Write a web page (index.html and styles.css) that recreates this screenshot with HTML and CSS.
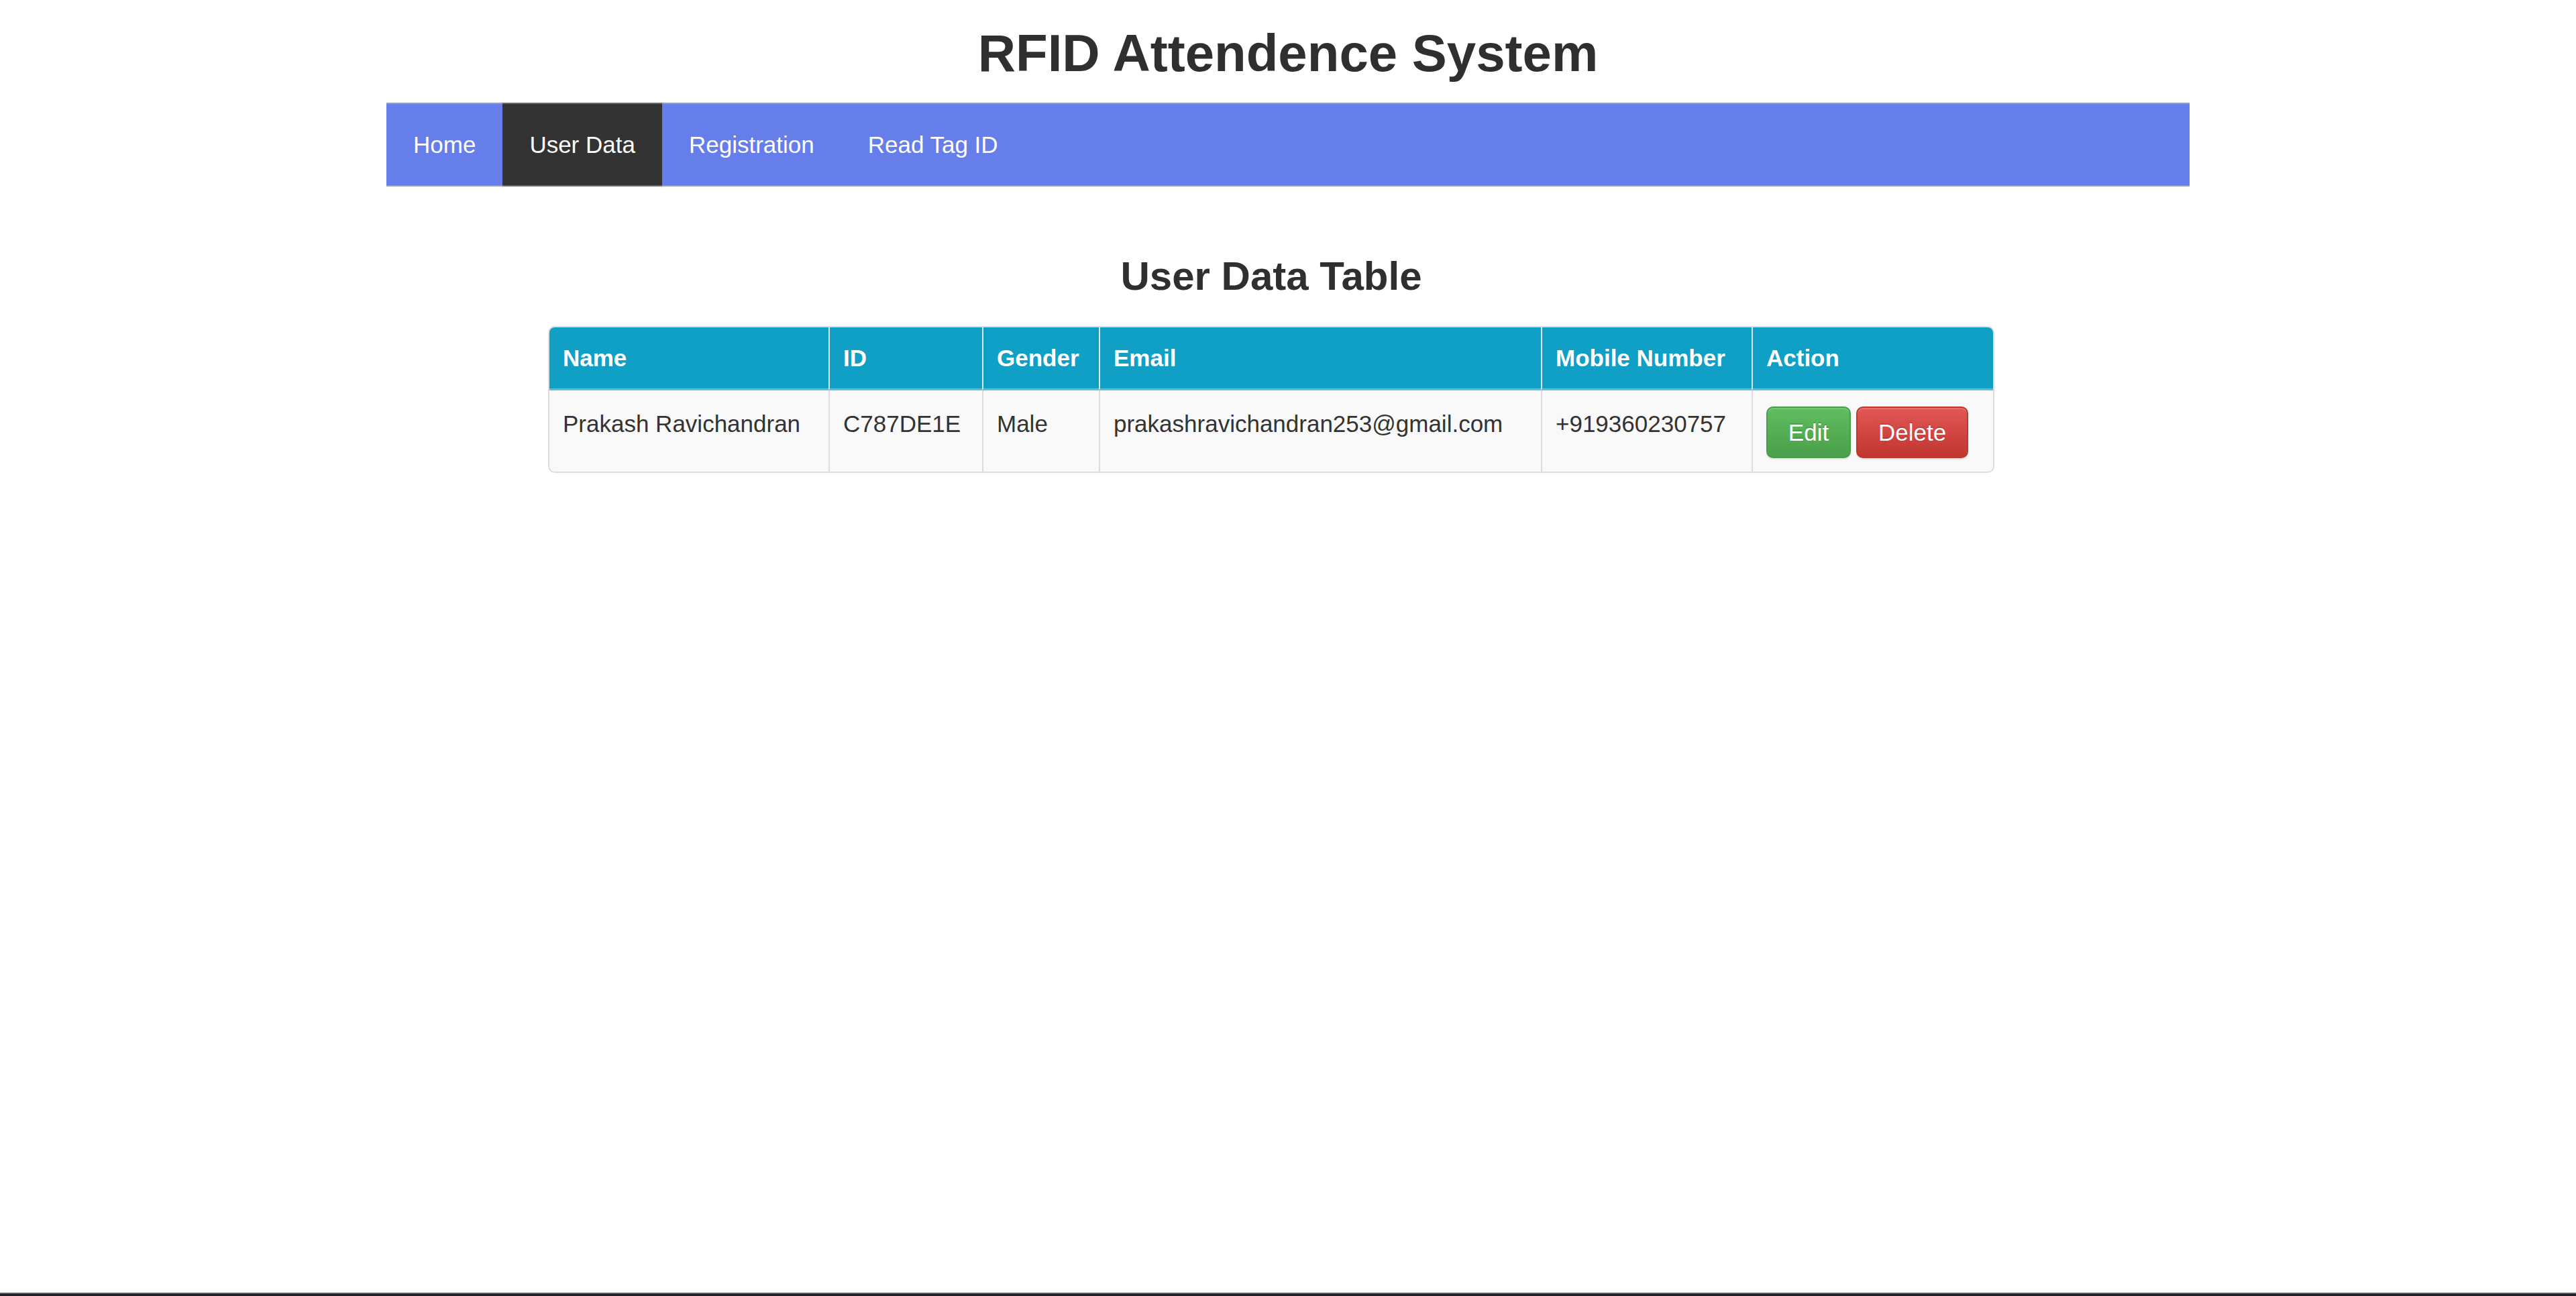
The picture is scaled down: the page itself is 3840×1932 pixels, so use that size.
FILE: index.html
```html
<!DOCTYPE html>
<html lang="en">
<head>
<meta charset="utf-8">
<title>RFID Attendence System</title>
<link rel="stylesheet" href="styles.css">
</head>
<body>
<h1 class="site-title">RFID Attendence System</h1>
<nav class="topnav">
  <a class="nav-link" href="#">Home</a>
  <a class="nav-link active" href="#">User Data</a>
  <a class="nav-link" href="#">Registration</a>
  <a class="nav-link" href="#">Read Tag ID</a>
</nav>
<main class="content">
  <h2 class="section-title">User Data Table</h2>
  <table class="data-table">
    <thead>
      <tr>
        <th class="col-name">Name</th>
        <th class="col-id">ID</th>
        <th class="col-gender">Gender</th>
        <th class="col-email">Email</th>
        <th class="col-mobile">Mobile Number</th>
        <th class="col-action">Action</th>
      </tr>
    </thead>
    <tbody>
      <tr>
        <td>Prakash Ravichandran</td>
        <td>C787DE1E</td>
        <td>Male</td>
        <td>prakashravichandran253@gmail.com</td>
        <td>+919360230757</td>
        <td><div class="actions"><a class="btn btn-edit" href="#">Edit</a><a class="btn btn-delete" href="#">Delete</a></div></td>
      </tr>
    </tbody>
  </table>
</main>
<div class="screen-edge"></div>
</body>
</html>
```

FILE: styles.css
```css
* { box-sizing: border-box; }

html, body {
  margin: 0;
  padding: 0;
  background: #ffffff;
}

body {
  font-family: "Liberation Sans", Arial, Helvetica, sans-serif;
  color: #333333;
  font-size: 35px;
  min-height: 1932px;
}

.site-title {
  margin: 0;
  padding-top: 33px;
  font-size: 78px;
  line-height: 92px;
  font-weight: bold;
  text-align: center;
  color: #2f2f2f;
}

.topnav {
  width: 2688px;
  height: 125px;
  margin: 28px auto 0;
  background: #667eea;
  display: flex;
  align-items: stretch;
  box-shadow: inset 0 2px 0 #8a9cf0, inset 0 -2px 0 #8a9cf0;
}

.nav-link {
  display: flex;
  align-items: center;
  padding: 0 40px;
  color: #ffffff;
  text-decoration: none;
  font-size: 35px;
}

.nav-link.active {
  background: #333333;
  box-shadow: inset 0 2px 0 #6a6a6a, inset 0 -2px 0 #6a6a6a;
}

.content {
  width: 3790px;
}

.section-title {
  margin: 99px 0 0;
  font-size: 60px;
  line-height: 69px;
  font-weight: bold;
  text-align: center;
  color: #2f2f2f;
}

.data-table {
  margin: 40px auto 0;
  width: 2156px;
  table-layout: fixed;
  border-collapse: separate;
  border-spacing: 0;
  border: 2px solid #dddddd;
  border-radius: 10px;
  background: #f9f9f9;
}

.col-name { width: 416px; }
.col-id { width: 229px; }
.col-gender { width: 174px; }
.col-email { width: 659px; }
.col-mobile { width: 314px; }
.col-action { width: 360px; }

.data-table th {
  background: #10a0c6;
  color: #ffffff;
  font-weight: bold;
  text-align: left;
  padding: 26px 20px 25px;
  line-height: normal;
  border-bottom: 3px solid #5fbbd8;
  white-space: nowrap;
}

.data-table th + th {
  border-left: 2px solid #d9e6ea;
}

.data-table th:first-child { border-top-left-radius: 8px; }
.data-table th:last-child { border-top-right-radius: 8px; }

.data-table td {
  vertical-align: top;
  padding: 24px 20px 20px;
  line-height: 52px;
  white-space: nowrap;
  color: #333333;
}

.data-table td + td {
  border-left: 2px solid #dddddd;
}

.actions {
  display: flex;
  gap: 8px;
}

.btn {
  display: flex;
  align-items: center;
  justify-content: center;
  height: 77px;
  padding: 0 31px;
  border-radius: 10px;
  color: #ffffff;
  text-decoration: none;
  font-size: 35px;
  line-height: 1;
  text-shadow: 0 -2px 0 rgba(0, 0, 0, 0.15);
  box-shadow: inset 0 2px 0 rgba(255, 255, 255, 0.15), 0 2px 3px rgba(0, 0, 0, 0.08);
}

.btn-edit {
  width: 126px;
  background: linear-gradient(to bottom, #5fbe5f 0%, #4a9f4a 100%);
  border: 2px solid #4a9c4a;
}

.btn-delete {
  width: 167px;
  background: linear-gradient(to bottom, #e25855 0%, #c1352f 100%);
  border: 2px solid #c0392f;
}

.screen-edge {
  position: fixed;
  left: 0;
  right: 0;
  bottom: 0;
  height: 5px;
  background: #1d1c27;
  border-top: 2px solid #5b5b62;
}
```
